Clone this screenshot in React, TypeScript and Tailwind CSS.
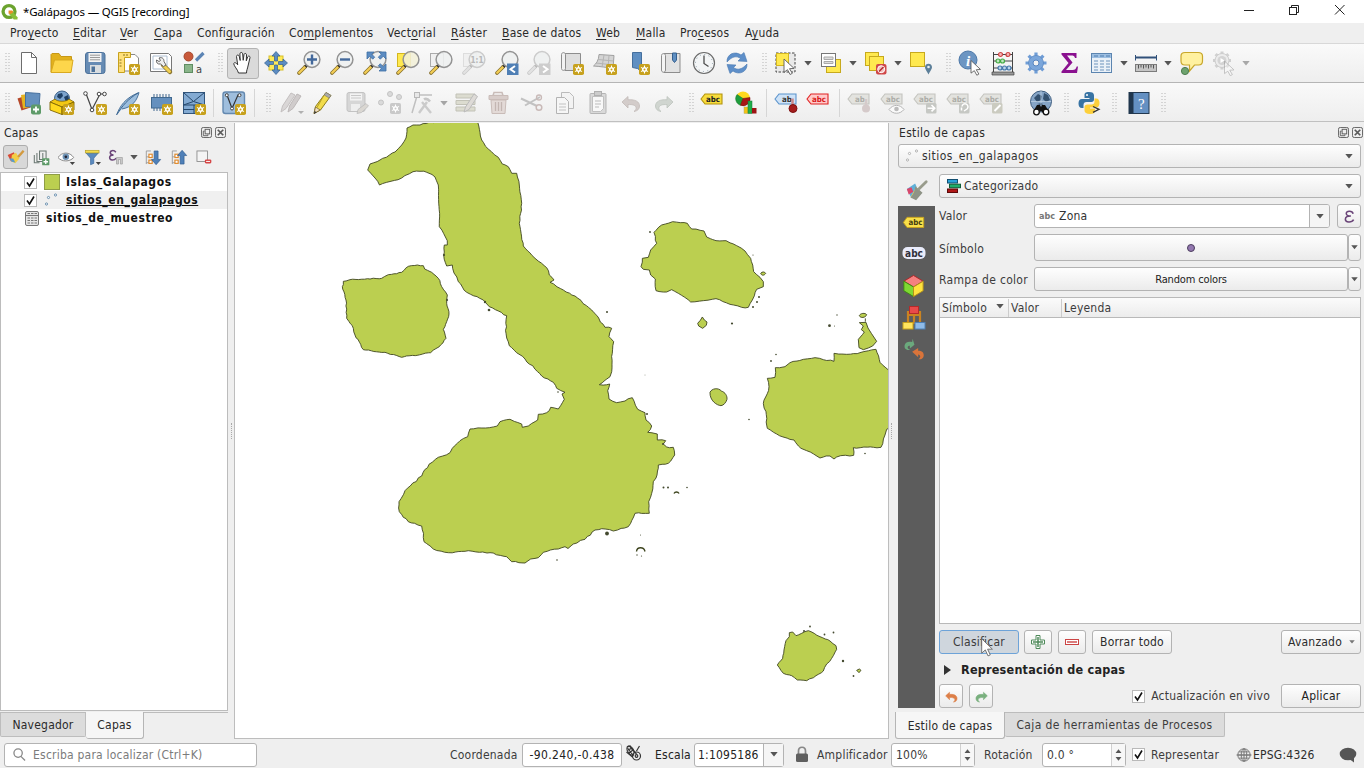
import React from "react";

type P = { children?: React.ReactNode; className?: string };

/* ---------- basic pieces ---------- */
const Ic = ({ children, className = "" }: P) => (
  <svg viewBox="0 0 26 26" className={"h-[26px] w-[26px] shrink-0 " + className} fill="none">
    {children}
  </svg>
);
const Slot = ({ children, className = "w-[33px]" }: P) => (
  <div className={"flex h-full shrink-0 items-center justify-center " + className}>{children}</div>
);
const Handle = ({ className = "w-[16px]" }: P) => (
  <Slot className={className}>
    <svg viewBox="0 0 5 20" className="h-5 w-[5px]" fill="#b4b4b4">
      {[0, 1, 2, 3, 4, 5, 6].map((i) => (
        <g key={i}>
          <rect x="0.5" y={i * 3} width="1" height="1" />
          <rect x="3.5" y={i * 3} width="1" height="1" />
        </g>
      ))}
    </svg>
  </Slot>
);
const Tri = ({ className = "text-[#555]" }: P) => (
  <svg viewBox="0 0 8 5" className={"h-[5px] w-2 shrink-0 " + className}>
    <path d="M0.3 0h7.400L4 4.600z" fill="currentColor" />
  </svg>
);
const Sep = ({ className = "w-2" }: P) => (
  <Slot className={className}>
    <div className="h-7 w-px bg-[#d6d6d6]" />
  </Slot>
);

const Star = ({ x = 14, y = 14, g = false }: { x?: number; y?: number; g?: boolean }) => (
  <g transform={`translate(${x} ${y})`}>
    <rect width="11" height="11" rx="1.8" fill={g ? "#c9c9c9" : "#c7a11d"} />
    <circle cx="5.5" cy="5.5" r="2.5" fill="#fff" />
    <path d="M5.5 1.4v8.2M2 3.4l7 4.2M9 3.4l-7 4.2" stroke="#fff" strokeWidth="1.1" />
    <circle cx="5.5" cy="5.5" r="1" fill={g ? "#c9c9c9" : "#c7a11d"} />
  </g>
);
const Lens = ({ children, g = false, fill = "#eef0f0" }: { children?: React.ReactNode; g?: boolean; fill?: string }) => (
  <g>
    <path d="M9.500 16.500L3 23" stroke={g ? "#cacaca" : "#86702c"} strokeWidth="3.800" strokeLinecap="round" />
    <path d="M9 17L3.200 22.800" stroke={g ? "#e2e2e2" : "#f3cd55"} strokeWidth="2.300" strokeLinecap="round" />
    <path d="M11.300 14.700L9.300 16.700" stroke={g ? "#b9b9b9" : "#333"} strokeWidth="2.800" />
    <circle cx="16" cy="9.500" r="7.900" fill={fill} fillOpacity="0.88" stroke={g ? "#cbcbcb" : "#939393"} strokeWidth="1.500" />
    {children}
  </g>
);
const TagShape = ({ fill, stroke, text, color = "#222" }: { fill: string; stroke: string; text: string; color?: string }) => (
  <g transform="translate(-1.500 -2)">
    <path d="M2.500 11L6.500 6h17v10h-17z" fill={fill} stroke={stroke} strokeWidth="1.100" />
    <text x="14.500" y="13.900" fontSize="7.800" letterSpacing="0" fontWeight="700" textAnchor="middle" fill={color} fontFamily="DejaVu Sans Condensed">{text}</text>
  </g>
);
const Globe = ({ cx, cy, r, c }: { cx: number; cy: number; r: number; c: string }) => (
  <g stroke={c} strokeWidth="1">
    <circle cx={cx} cy={cy} r={r} />
    <ellipse cx={cx} cy={cy} rx={r * 0.45} ry={r} />
    <path d={`M${cx - r} ${cy}h${2 * r}M${cx} ${cy - r}v${2 * r}M${cx - r * 0.8} ${cy - r * 0.5}h${r * 1.6}M${cx - r * 0.8} ${cy + r * 0.5}h${r * 1.6}`} />
  </g>
);
const Arrow = () => <path d="M0 0l10 9.4-4.5.3 2.8 4.6-2.2 1.2-2.6-4.8-3.5 2.6z" fill="#fff" stroke="#5b5b5b" strokeWidth="0.9" />;
const Undo = ({ c, s = c }: { c: string; s?: string }) => (
  <path d="M4 12l6-5.5v3.3c7-.6 11.5 1.8 11.5 6.2 0 3-2 5-5.5 5.5 1.8-1.4 2.4-2.6 2-4.2-.5-2-3.3-3-8-2.7V18z" fill={c} stroke={s} strokeWidth="0.8" />
);

/* ---------- toolbars ---------- */
const TopBar = () => (
  <div className="flex h-[39px] shrink-0 items-center border-b border-[#b5b5b5] bg-gradient-to-b from-[#fafafa] to-[#eeeeee]">
    <Handle className="w-[12px] pl-[3px]" />
    <Slot><Ic><path d="M5.500 2.500h10l5 5v16h-15z" fill="#fff" stroke="#6d6d6d" /><path d="M15.500 2.500v5h5" stroke="#6d6d6d" /></Ic></Slot>
    <Slot><Ic><path d="M2 22V4.500l1-1h7l2 3h10.500v4" fill="#e2b11c" stroke="#c79816" /><path d="M2 22.500L5.500 10h18.500L22 22.500z" fill="#fdd64b" stroke="#d9a91f" /></Ic></Slot>
    <Slot><Ic><rect x="3.500" y="2.500" width="19.500" height="21" rx="2.500" fill="#668bb4" stroke="#4d729a" /><rect x="6.500" y="3" width="13" height="9" fill="#f2f2f2" /><path d="M8 5.200h10M8 7.500h10M8 9.800h10" stroke="#999" /><rect x="8" y="15" width="11" height="8" fill="#d9dde0" /><rect x="9.500" y="16.500" width="3.500" height="5.500" fill="#4d729a" /></Ic></Slot>
    <Slot><Ic><path d="M5 4.500h15l3.500 3.500v13H5z" fill="#fff" stroke="#888" /><path d="M3.500 2.500h12v5H9.500v15h-6z" fill="#ffe07a" stroke="#c7a11d" /><path d="M4.500 10h2M4.500 13h2M4.500 16h2M9 4v2M12 4v2" stroke="#8a7420" /><Star /></Ic></Slot>
    <Slot><Ic><path d="M2.500 3.500h18l3 3v15h-21z" fill="#fff" stroke="#777" /><path d="M5 6h14v13H5z" stroke="#aebfd2" /><path d="M15 15l7 7" stroke="#8c7732" strokeWidth="4.500" strokeLinecap="round" /><path d="M16 16l5.500 5.500" stroke="#f1cf50" strokeWidth="3" strokeLinecap="round" /><path d="M11 8c2.500-1 5 0 5 3.500l2 3.500-2.500 1.500-3-2.500c-3 .5-4.500-1.500-4-4l2.500 1.500 1.500-1z" fill="#eee" stroke="#666" /></Ic></Slot>
    <Slot><Ic><circle cx="7.500" cy="6.500" r="4.500" fill="#c8593a" stroke="#a5462c" /><path d="M15 10.500L22.500 3" stroke="#5c85b5" strokeWidth="3.200" /><rect x="3.500" y="14.500" width="8" height="8" fill="#8ab58a" stroke="#5f8d62" /><text x="15" y="22.500" fontSize="11" fill="#444" fontFamily="DejaVu Sans Condensed">a</text></Ic></Slot>
    <Handle className="w-[17px] pl-[3px]" />
    <Slot className="w-[32.900px]">
      <div className="flex h-[31px] w-[32px] items-center justify-center rounded-[3px] border border-[#b3b3b3] bg-[#dadada]">
        <Ic><path d="M8.500 23c-1-4-4.500-6.500-4.800-9.500 1-1.500 2.500-.8 4 1.300L6.500 6.500c0-1.800 2.200-2 2.700-.3l1 4.300-.3-6.700c.2-1.800 2.500-1.800 2.800 0l.5 6.500.8-5.800c.5-1.600 2.400-1.300 2.500.3l-.2 6 1.400-4c.8-1.300 2.500-.8 2.300.8L18 16c-.5 3-1.500 4-1.500 7z" fill="#fff" stroke="#333" /></Ic>
      </div>
    </Slot>
    <Slot className="w-[32.900px]"><Ic><rect x="6" y="6" width="14" height="14" fill="#ffea57" stroke="#d8bf28" /><path d="M13 1.500l4 4.500h-2.500v5h-3V6H9zM13 24.500l4-4.500h-2.500v-5h-3v5H9zM1.500 13L6 9v2.500h4.500v3H6V17zM24.500 13L20 9v2.500h-4.500v3H20V17z" fill="#5c8cc2" stroke="#34608f" strokeWidth="0.700" /></Ic></Slot>
    <Slot className="w-[32.900px]"><Ic><Lens><path d="M16 4.500v10M11 9.500h10" stroke="#44699b" strokeWidth="2.400" /></Lens></Ic></Slot>
    <Slot className="w-[32.900px]"><Ic><Lens><path d="M11 9.500h10" stroke="#44699b" strokeWidth="2.400" /></Lens></Ic></Slot>
    <Slot className="w-[32.900px]"><Ic><Lens /><path d="M5 2h7L9.700 4.200l3 3-2 2-3-3L5 9zM24 2h-7l2.300 2.200-3 3 2 2 3-3L24 9zM24 21h-7l2.300-2.300-3-3 2-2 3 3L24 14z" fill="#5c8cc2" stroke="#3e6fa5" strokeWidth="0.800" /></Ic></Slot>
    <Slot className="w-[32.900px]"><Ic><rect x="2.500" y="3.500" width="13" height="13" fill="#ffe94f" stroke="#d4b720" /><Lens fill="#f3f0d8" /></Ic></Slot>
    <Slot className="w-[32.900px]"><Ic><rect x="2.500" y="3.500" width="13" height="13" fill="#f0f0f0" stroke="#aaa" /><Lens /></Ic></Slot>
    <Slot className="w-[32.900px]"><Ic><rect x="2.500" y="3.500" width="13" height="13" fill="#f0f0f0" stroke="#ddd" /><Lens g><text x="16" y="12.500" fontSize="8" letterSpacing="0" fontWeight="700" textAnchor="middle" fill="#b8b8b8" fontFamily="DejaVu Sans Condensed">1:1</text></Lens></Ic></Slot>
    <Slot className="w-[32.900px]"><Ic><Lens /><rect x="13" y="13.500" width="11.500" height="11.500" fill="#4f7fb5" /><path d="M21 16l-4.500 3.200L21 22.500" stroke="#fff" strokeWidth="2" /></Ic></Slot>
    <Slot className="w-[32.900px]"><Ic><Lens g /><rect x="13" y="13.500" width="11.500" height="11.500" fill="#cdcdcd" /><path d="M17 16l4.500 3.200L17 22.500" stroke="#fff" strokeWidth="2" /></Ic></Slot>
    <Slot className="w-[32.900px]"><Ic><path d="M6 3.500h15.500v17H6z" fill="#dedede" stroke="#8d8d8d" /><path d="M2.500 4.500c0-2.500 4-2.500 4 0v14c0 2.500-4 2.500-4 0z" fill="#f2f2f2" stroke="#8d8d8d" /><Star /></Ic></Slot>
    <Slot className="w-[32.900px]"><Ic><path d="M7 4.500l15 1-1 13c-6-1-12-2-19.500-2.500C4 14 7 10 7 4.500z" fill="#d4d4d4" stroke="#a0a0a0" /><path d="M12 5l-2 12M17 5.500l-1 12.500M6 9.500l15.500 1.500M4 13l17.500 2" stroke="#b4b4b4" /><Star /></Ic></Slot>
    <Slot className="w-[32.900px]"><Ic><path d="M7.500 2.500h9v19l-4-3-5-1z" fill="#5f8fc2" stroke="#446f9d" /><Star /></Ic></Slot>
    <Slot className="w-[32.900px]"><Ic><path d="M6 3.500h16v19H6z" fill="#e2e2e2" stroke="#8d8d8d" /><path d="M3.500 5.500c0-2.500 4-2.500 4 0V20c0 3-4 3-4 0z" fill="#f5f5f5" stroke="#8d8d8d" /><path d="M14.500 3h4v7l-2 2.500-2-2.500z" fill="#5f8fc2" stroke="#35608f" /></Ic></Slot>
    <Slot className="w-[32.900px]"><Ic><circle cx="13" cy="13" r="10.500" fill="#f3f5f6" stroke="#6a6a6a" strokeWidth="1.200" /><path d="M13 5.500v8l4.500 3" stroke="#4c4c4c" strokeWidth="1.300" /><circle cx="13" cy="13" r="8.500" stroke="#8a9ba8" strokeDasharray="1 3.450" /></Ic></Slot>
    <Slot className="w-[32.900px]"><Ic><path d="M3 12C2.500 4 11 .5 17 5l3-2.500 3 9-9-.5 2.500-2.500C12.500 5.500 8 6.500 3 12z" fill="#5e8fc9" stroke="#4a79b0" strokeWidth="0.600" /><path d="M23 14c.5 8-8 11.500-14 7l-3 2.500-3-9 9 .5-2.500 2.500c4 3 8.500 2 13.500-3.500z" fill="#5e8fc9" stroke="#4a79b0" strokeWidth="0.600" /></Ic></Slot>
    <Handle className="w-[17px] pl-[6px]" />
    <Slot className="w-[31px]"><Ic><rect x="3" y="3" width="19" height="19" stroke="#444" strokeDasharray="2.500 1.500" fill="#e9e9e9" /><rect x="3.500" y="3.500" width="12" height="12" fill="#ffe94f" stroke="#d4b720" /><g transform="translate(11 9)"><Arrow /></g></Ic></Slot>
    <Slot className="w-[14px]"><Tri /></Slot>
    <Slot className="w-[32px]"><Ic><rect x="8.500" y="9.500" width="14" height="13" fill="#ffe94f" stroke="#c7a91d" /><rect x="3.500" y="3.500" width="14" height="13" fill="#fff" stroke="#777" /><path d="M6 7h9v2.500H6zM6 11.500h9v2H6z" stroke="#aaa" fill="#ddd" /></Ic></Slot>
    <Slot className="w-[12px]"><Tri /></Slot>
    <Slot><Ic><rect x="2.500" y="2.500" width="13" height="13" fill="#ffe94f" stroke="#c7a91d" /><rect x="6.500" y="6.500" width="14" height="14" fill="#ffe94f" stroke="#c7a91d" /><rect x="13" y="14" width="10.500" height="10.500" rx="2" fill="#d04848" /><circle cx="18.200" cy="19.200" r="3.500" fill="#f3c0c0" stroke="#fff" /><path d="M16 21.500l4.500-4.500" stroke="#b02b2b" strokeWidth="1.500" /></Ic></Slot>
    <Slot className="w-[12px]"><Tri /></Slot>
    <Slot><Ic><rect x="2.500" y="2.500" width="14" height="14" fill="#ffe94f" stroke="#c7a91d" /><path d="M20.500 24.500c-2-4-3.500-5.500-3.500-7.500 0-4.500 7-4.500 7 0 0 2-1.500 3.500-3.500 7.500z" fill="#5c7f99" /><circle cx="20.500" cy="17" r="1.300" fill="#e8eef2" /></Ic></Slot>
    <Handle className="w-[16px] pl-[6px]" />
    <Slot><Ic><circle cx="11" cy="10" r="9" fill="#6c95c2" stroke="#4d78a8" /><text x="11" y="15.500" fontSize="15" letterSpacing="0" fontWeight="700" fontStyle="italic" textAnchor="middle" fill="#fff" fontFamily="Liberation Serif">i</text><g transform="translate(14 10.500) scale(.95)"><Arrow /></g></Ic></Slot>
    <Slot><Ic><path d="M3.500 2v20M22.500 2v20M3 4.500h20M3 11h20M3 18h20" stroke="#444" /><path d="M2 22h22v3H2z" fill="#999" stroke="#444" strokeWidth="0.700" /><g strokeWidth="1.200"><circle cx="10.500" cy="4.500" r="2" fill="#f4b5b5" stroke="#c44" /><circle cx="18" cy="4.500" r="2" fill="#f4b5b5" stroke="#c44" /><circle cx="8" cy="11" r="2" fill="#bfe8bf" stroke="#4a4" /><circle cx="12.500" cy="11" r="2" fill="#bfe8bf" stroke="#4a4" /><circle cx="10" cy="18" r="2" fill="#bcd5ec" stroke="#47a" /><circle cx="14.500" cy="18" r="2" fill="#bcd5ec" stroke="#47a" /><circle cx="19" cy="18" r="2" fill="#bcd5ec" stroke="#47a" /></g></Ic></Slot>
    <Slot><Ic><g stroke="#6f9dd6" strokeWidth="3.200"><path d="M13 2.500v21M2.500 13h21M5.600 5.600l14.800 14.800M20.400 5.600L5.600 20.400" /></g><circle cx="13" cy="13" r="7.500" fill="#7ba6da" stroke="#5785c0" strokeWidth="0.700" /><circle cx="13" cy="13" r="3" fill="#f3f3f3" stroke="#5785c0" /></Ic></Slot>
    <Slot><Ic><path d="M5.500 3h15v5h-1.500c-.5-2-1.500-2.500-4-2.500H11l5.500 7-6.500 7.500h6.500c2.500 0 3.500-1 4.200-3.500H22L21 23H5.500v-1.500l7-8.500-7-8.500z" fill="#8a118f" /></Ic></Slot>
    <Slot><Ic><rect x="2.500" y="3.500" width="20" height="19" fill="#eaf1f8" stroke="#5c85b0" /><rect x="3" y="4" width="19" height="4" fill="#9dbfe2" /><path d="M5 6h4M11 6h4M17 6h4" stroke="#4e7dae" /><path d="M5 11h4M5 14h4M5 17h4M5 20h4M11 11h4M11 14h4M11 17h4M11 20h4M17 11h4M17 14h4M17 17h4M17 20h4" stroke="#6d94bc" strokeWidth="1.200" /></Ic></Slot>
    <Slot className="w-[11px]"><Tri /></Slot>
    <Slot><Ic><path d="M3 7.500h20" stroke="#31517a" strokeWidth="2" /><path d="M2.500 5v5.500M23.500 5v5.500" stroke="#31517a" /><rect x="2.500" y="14.500" width="21" height="7" fill="#c5c5c5" stroke="#7b7b7b" /><path d="M5.500 15v3.500M8 15v2.500M10.500 15v3.500M13 15v2.500M15.500 15v3.500M18 15v2.500M20.500 15v3.500" stroke="#555" /></Ic></Slot>
    <Slot className="w-[12px]"><Tri /></Slot>
    <Slot><Ic><path d="M7 2.500h13c3 0 4.500 1 4.500 3.500v5c0 2.500-1.500 4-4 4h-4l-5 6v-6H7c-3 0-4-1.500-4-4V6c0-2.500 1-3.500 4-3.500z" fill="#fff1a0" stroke="#c8a72b" strokeWidth="1.200" /><circle cx="7" cy="21" r="3.600" fill="#6da26d" stroke="#4d7d50" /></Ic></Slot>
    <Slot><Ic><g stroke="#d0d0d0" strokeWidth="3"><path d="M11 1.500v18M2 10.500h18M4.600 4.100l12.800 12.800M17.400 4.100L4.600 16.900" /></g><circle cx="11" cy="10.500" r="7" fill="#ececec" stroke="#cdcdcd" /><circle cx="11" cy="10.500" r="4.500" fill="#d4d4d4" /><path d="M9.500 8v5l4-2.500z" fill="#fff" /><g opacity="0.350" transform="translate(13.500 11) scale(.95)"><Arrow /></g></Ic></Slot>
    <Slot className="w-[12px]"><Tri className="text-[#a8a8a8]" /></Slot>
  </div>
);

const GREY = { fill: "#e3e3df", stroke: "#c4c4bf", color: "#adada8" };
const SecondBar = () => (
  <div className="flex h-[39px] shrink-0 items-center border-b border-[#c0c0c0] bg-gradient-to-b from-[#f9f9f9] to-[#eeeeee] pt-[2px]">
    <Handle className="w-[12px] pl-[3px]" />
    <Slot><Ic><path d="M1.500 8.500l9-3 4 12-9 3z" fill="#b5482a" /><path d="M5 5l10-1.500 2 13-10 2z" fill="#e5b320" /><path d="M9.500 2.500l14.500 1-1 14-13.500-1z" fill="#6590be" stroke="#47719f" /><rect x="15" y="14.500" width="10" height="10" rx="2" fill="#5d9a68" /><path d="M20 16.500v6M17 19.500h6" stroke="#fff" strokeWidth="1.800" /></Ic></Slot>
    <Slot><Ic><circle cx="13" cy="8.500" r="7.500" fill="#7ca3cc" stroke="#3a5f88" /><path d="M9 4l4-1 1 3-3 3-3-2zM15 7l4-2 1 4-3 3z" fill="#1f3f63" /><path d="M1 12l5-3c2 3 12 3 14 0l5 3-12 5z" fill="#f3c813" stroke="#7d6405" strokeWidth="0.800" /><path d="M1 12l12 5v7.500L1 20z" fill="#ffd91e" stroke="#7d6405" strokeWidth="0.900" /><path d="M13 17l12-5v8l-12 4.500z" fill="#e0b000" stroke="#7d6405" strokeWidth="0.900" /><Star /></Ic></Slot>
    <Slot><Ic><path d="M4 3.500l6 16L18 4h4" stroke="#444" strokeWidth="1.200" /><g fill="#fff" stroke="#444"><circle cx="3.500" cy="3.500" r="1.800" /><circle cx="10" cy="20" r="1.800" /><circle cx="17" cy="4" r="1.800" /><circle cx="22.500" cy="4" r="1.800" /></g><Star x={14} /></Ic></Slot>
    <Slot><Ic><path d="M1.500 25C5 16 10 8 24 2.500 22 10 18 17 7 19" fill="#9cbede" stroke="#4a739c" /><path d="M2 24.500C7 16 13 9 23 3" stroke="#3d6690" /><Star /></Ic></Slot>
    <Slot><Ic><path d="M6 4v17M9 4v17M12 4v17M15 4v17M18 4v17M21 4v17" stroke="#5f7f9f" strokeWidth="1.200" /><rect x="3.500" y="7.500" width="20" height="10.500" fill="#6590be" stroke="#41698f" /><Star /></Ic></Slot>
    <Slot><Ic><rect x="2.500" y="2.500" width="21" height="21" fill="#83aad2" stroke="#31557c" /><path d="M2.500 15h21M13 15v8.500M2.500 2.500l10 9 11-9M2.500 15l10-3.500 11 3.500M2.500 19.500H13" stroke="#26486c" /><Star /></Ic></Slot>
    <Sep className="w-[7px]" />
    <Slot><Ic><rect x="2" y="2" width="21.500" height="21.500" rx="2.500" fill="#9fbedd" stroke="#6489b0" strokeWidth="1.400" /><path d="M6 5l5 13.500L17 5h3" stroke="#333" strokeWidth="1.200" /><g fill="#fff" stroke="#444"><circle cx="5.800" cy="5.200" r="1.500" /><circle cx="11" cy="18.500" r="1.500" /><circle cx="18.500" cy="5.200" r="1.500" /></g><Star /></Ic></Slot>
    <Sep className="w-[8px]" />
    <Handle className="w-[16px] pl-[4px]" />
    <Slot><Ic><path d="M3 22l1.500-6L13 3l4 2-9 13.500z" fill="#d9d6d6" stroke="#c4c0c0" /><path d="M10 22l1.500-6L19 4l4 2-8 12.500z" fill="#d0cccc" stroke="#bdb8b8" /><path d="M20 21h6l-3 3z" fill="#b0b0b0" /></Ic></Slot>
    <Slot className="w-[33px] pr-[3px]"><Ic><path d="M5 23.500l1.500-7L17 2.500l5 3-10.500 14.500z" fill="#f2dc4b" stroke="#8f7e1d" /><path d="M17 2.500l5 3-1.800 2.500-5-3z" fill="#aaa" stroke="#777" strokeWidth="0.600" /><path d="M14.500 6L8 17.500" stroke="#b5a024" /><path d="M5 23.500l1.500-6.500 4.700 3z" fill="#f1dfc0" stroke="#6e5d2e" strokeWidth="0.700" /><path d="M5 24l.6-3 2 1.300z" fill="#333" /></Ic></Slot>
    <Slot><Ic><rect x="3" y="2.500" width="18" height="19" rx="2" fill="#d6d6d6" stroke="#c3c3c3" /><rect x="6" y="3.500" width="12" height="7" fill="#f3f3f3" /><path d="M7 5.500h10M7 8h10" stroke="#c8c8c8" /><rect x="7" y="14" width="9" height="7" fill="#eee" /><path d="M13 23.500l1-4 8-6 2.500 2.500-7 6.500z" fill="#dad7d2" stroke="#bbb" strokeWidth="0.800" /></Ic></Slot>
    <Slot><Ic><g fill="#dadada" stroke="#c4c4c4"><circle cx="13" cy="4" r="2.500" /><circle cx="22" cy="7" r="2.500" /><circle cx="4" cy="12.500" r="2.500" /></g><Star x={13} y={13} g /></Ic></Slot>
    <Slot className="w-[32px]"><Ic><path d="M3 23l5-17M8 5h15" stroke="#c0c0c0" strokeWidth="1.500" /><rect x="5.500" y="2.500" width="5" height="5" fill="#e8e8e8" stroke="#b8b8b8" /><path d="M10 23l8-11M13 12l9 11" stroke="#cbcbcb" strokeWidth="2.400" /><path d="M15 9.500c2-1.500 4-.5 6 2" stroke="#c6c6c6" strokeWidth="2.600" /></Ic></Slot>
    <Slot className="w-[11px]"><Tri className="text-[#a5a5a5]" /></Slot>
    <Slot><Ic><path d="M3 4h19v4H3zM3 10.500h19v4H3zM3 17h19v4H3z" fill="#dcdcd0" stroke="#c2c2b7" /><path d="M11 22l1.500-5L21 4l3.500 2.500-8.500 13z" fill="#dedbd7" stroke="#bbb" /></Ic></Slot>
    <Slot><Ic><path d="M8 2.500h8l1 3H7z" stroke="#c9bcb8" strokeWidth="1.500" /><path d="M3 5.500h19v4H3z" fill="#d8cdca" stroke="#c9bcb8" /><path d="M5 10h15l-1 13.500H6z" fill="#e3dad7" stroke="#c9bcb8" /><path d="M9.500 12v9M12.500 12v9M15.500 12v9" stroke="#c3b6b2" strokeWidth="1.300" /></Ic></Slot>
    <Slot><Ic><path d="M2 8.500l16 7.500M6 15.500l15-8.500" stroke="#c2c2c2" strokeWidth="2" /><circle cx="20" cy="7.500" r="2.500" stroke="#c9bab8" strokeWidth="1.300" /><circle cx="20" cy="17.500" r="2.800" stroke="#c9bab8" strokeWidth="1.500" /></Ic></Slot>
    <Slot><Ic><path d="M9.500 2.500h8l4 4v12h-12z" fill="#f3f3f3" stroke="#bbb" /><path d="M4.500 7.500h8l4 4v12h-12z" fill="#f6f6f6" stroke="#b3b3b3" /><path d="M7 14h7M7 17h7M7 20h7" stroke="#c2c2c2" /></Ic></Slot>
    <Slot><Ic><rect x="5" y="3.500" width="16" height="20" rx="1" fill="#d9d9d9" stroke="#b5b5b5" /><path d="M7.500 6.500h11v12l-3 3h-8z" fill="#f8f8f8" stroke="#c0c0c0" /><rect x="9.500" y="1.500" width="7" height="4" fill="#ccc" stroke="#b0b0b0" /><path d="M10 11h6M10 14h6M10 17h4" stroke="#bbb" /></Ic></Slot>
    <Slot><Ic><Undo c="#d3ccca" s="#c2bab8" /></Ic></Slot>
    <Slot><Ic className="-scale-x-100"><Undo c="#d0d5d0" s="#bdc3bd" /></Ic></Slot>
    <Handle className="w-[16px] pl-[6px]" />
    <Slot><Ic><TagShape fill="#f7dc3c" stroke="#b3940f" text="abc" /></Ic></Slot>
    <Slot><Ic><circle cx="10" cy="8.500" r="7" fill="#ffd91e" /><path d="M10 8.500L4 4.500a7 7 0 003.500 10.800z" fill="#1f9d3c" stroke="#11702a" strokeWidth="0.500" /><path d="M10 8.500l7-1a7 7 0 01-9.500 7.800z" fill="#a81616" stroke="#6d0d0d" strokeWidth="0.500" /><rect x="11" y="17" width="4" height="6.500" fill="#f5c211" stroke="#aa7" strokeWidth="0.500" /><rect x="15" y="11" width="4" height="12.500" fill="#1fae4b" stroke="#147334" strokeWidth="0.500" /><rect x="19" y="18" width="4.500" height="5.500" fill="#9c1414" /></Ic></Slot>
    <Sep className="w-[9px]" />
    <Slot className="w-[32px]"><Ic><TagShape fill="#cde2f7" stroke="#5b93cc" text="ab" color="#333" /><path d="M18.500 8.500v7" stroke="#c88" strokeWidth="2.500" /><circle cx="19" cy="18.500" r="4" fill="#a51d1d" stroke="#7d1111" /></Ic></Slot>
    <Slot className="w-[32px]"><Ic><TagShape fill="#ffc9c9" stroke="#e02222" text="abc" color="#d81818" /></Ic></Slot>
    <Sep className="w-[8px]" />
    <Slot><Ic><TagShape {...GREY} text="ab" /><circle cx="19" cy="18.500" r="4" fill="#d5caca" /><path d="M19 9v7" stroke="#d5caca" strokeWidth="2.500" /></Ic></Slot>
    <Slot><Ic><TagShape {...GREY} text="abc" /><path d="M9 19.500c4-5.500 11-5.500 15 0-4 5-11 5-15 0z" fill="#fafafa" stroke="#b5b5b5" /><circle cx="16.500" cy="19" r="2.300" fill="#bbb" /></Ic></Slot>
    <Slot><Ic><TagShape {...GREY} text="abc" /><rect x="13" y="13" width="10.500" height="10.500" rx="1.500" fill="#c6c8c4" /><path d="M14.500 18.200h7M18.500 15l3.200 3.200-3.200 3.200" stroke="#fff" strokeWidth="1.600" /></Ic></Slot>
    <Slot><Ic><TagShape {...GREY} text="abc" /><rect x="13" y="13" width="10.500" height="10.500" rx="1.500" fill="#c6c8c4" /><path d="M16 16.500a3 3 0 115 2.500l-3 2M15.500 17.500v3" stroke="#fff" strokeWidth="1.500" /></Ic></Slot>
    <Slot><Ic><TagShape {...GREY} text="abc" /><rect x="13" y="13" width="10.500" height="10.500" rx="1.500" fill="#cbcbc0" /><path d="M15.500 21l6-6" stroke="#fff" strokeWidth="2" /></Ic></Slot>
    <Handle className="w-[16px] pl-[3px]" />
    <Slot><Ic><circle cx="13" cy="11.500" r="10.500" fill="#86a5c7" stroke="#3f5e80" /><path d="M6 8l4-4 4 2-1 4-4 2zM16 3l4 2 2 5-4 2-3-3zM9 14l5-1 1 3z" fill="#34516f" /><path d="M3 11.500h20M13 1v21" stroke="#c4d5e6" strokeWidth="0.700" /><path d="M6 20l3-5h3l1 2 1-2h3l3 5v3h-5l-2-2-2 2H6z" fill="#111" /><circle cx="8.500" cy="22" r="2.800" fill="#fff" stroke="#111" strokeWidth="1.300" /><circle cx="18" cy="22" r="2.800" fill="#fff" stroke="#111" strokeWidth="1.300" /></Ic></Slot>
    <Handle className="w-[16px] pl-[2px]" />
    <Slot><Ic><path d="M12 2c-4 0-4.500 1.500-4.500 3.500V8h5v1H5c-2.500 0-3.500 2-3.500 4.500S2.500 18 5 18h1.500v-3c0-2 1-3 3-3h5c1.500 0 2.500-1 2.500-2.500v-4C17 3 15.500 2 12 2z" fill="#3873a3" /><path d="M19 8.500h-1.500v3c0 2-1 3-3 3h-4c-2 0-3 1-3 2.500v3.500c0 2 2 3.500 5.500 3.500s5-1 5-3.500v-2h-5v-1H19c2.500 0 3.500-2 3.500-4.500S21.500 8.500 19 8.500z" fill="#fdd03b" /><circle cx="10" cy="5" r="1" fill="#fff" /><path d="M16 16.500l6 2.800-6 3" stroke="#333" strokeWidth="1.300" /></Ic></Slot>
    <Handle />
    <Slot><Ic><rect x="3" y="2.500" width="20" height="21" fill="#6490c2" stroke="#22384f" /><rect x="3" y="2.500" width="4.500" height="21" fill="#20364d" /><text x="15.300" y="18.500" fontSize="15" letterSpacing="0" textAnchor="middle" fill="#fff" fontFamily="Liberation Serif">?</text></Ic></Slot>
    <Handle className="w-[16px]" />
  </div>
);

/* ---------- window chrome ---------- */
const MENU: [string, string, string, string][] = [
  ["Pro", "y", "ecto", "w-[63px]"], ["", "E", "ditar", "w-[47px]"], ["", "V", "er", "w-[34px]"], ["", "C", "apa", "w-[43px]"],
  ["Confi", "g", "uración", "w-[92px]"], ["Co", "m", "plementos", "w-[98px]"], ["Vect", "o", "rial", "w-[64px]"], ["", "R", "áster", "w-[51px]"],
  ["", "B", "ase de datos", "w-[94px]"], ["", "W", "eb", "w-[40px]"], ["", "M", "alla", "w-[44px]"], ["Pro", "c", "esos", "w-[65px]"], ["A", "y", "uda", "w-[50px]"],
];

const FloatClose = () => (
  <div className="flex gap-[3px]">
    <svg viewBox="0 0 12 12" className="h-[11px] w-[11px]" fill="none" stroke="#5a5a5a"><rect x="0.500" y="0.500" width="11" height="11" rx="2" /><rect x="4.500" y="2.500" width="5" height="5" /><path d="M4 4.500H2.500v5h5V8" /></svg>
    <svg viewBox="0 0 12 12" className="h-[11px] w-[11px]" fill="none" stroke="#5a5a5a"><rect x="0.500" y="0.500" width="11" height="11" rx="2" /><path d="M3 3l6 6M9 3l-6 6" strokeWidth="1.900" /></svg>
  </div>
);
const Check = ({ className = "" }: P) => (
  <svg viewBox="0 0 13 13" className={"h-[13px] w-[13px] shrink-0 " + className}>
    <rect x="0.500" y="0.500" width="12" height="12" fill="#fff" stroke="#b9b9b9" />
    <path d="M3 6.500L5.500 10 10 2.500" fill="none" stroke="#111" strokeWidth="1.600" />
  </svg>
);
const Dots = ({ c }: { c: string }) => (
  <svg viewBox="0 0 14 14" className="h-[14px] w-[14px] shrink-0" fill="#fff" stroke={c} strokeWidth="0.900"><circle cx="2.500" cy="11" r="1.100" /><circle cx="4.500" cy="4.500" r="1.100" /><circle cx="11.500" cy="2" r="1.100" /></svg>
);
const Brush = ({ className = "" }: P) => (
  <Ic className={className}>
    <path d="M2 12l9-6 4 9-8 7z" fill="#5fb0d8" /><path d="M2 12l5-2 2 5-5 3z" fill="#d9476b" /><path d="M8 17l4-7 4 3-5 9-5-1z" fill="#efcf53" />
    <path d="M11 9l8 7-7 8-6-3c3-3 5-7 5-12z" fill="#8e9386" /><path d="M15 12l8-8" stroke="#999c8c" strokeWidth="3" strokeLinecap="round" />
  </Ic>
);

const TreeArrow = ({ up = false }: { up?: boolean }) => (
  <Ic className="!h-[17px] !w-[17px]"><path d="M2 3h7M2 3v20M2 12h4M2 21h4" stroke="#999" strokeWidth="1.400" /><rect x="6" y="8" width="5" height="5" fill="#fff" stroke="#e08a2c" strokeWidth="1.800" /><rect x="6" y="17" width="5" height="5" fill="#fff" stroke="#e08a2c" strokeWidth="1.800" /><path d={up ? "M17 2l7 8h-4v13h-6V10h-4z" : "M17 24l7-8h-4V3h-6v13h-4z"} fill="#4f80b8" stroke="#2f5b8d" /></Ic>
);

const LayersDock = () => (
  <div className="flex w-[228px] shrink-0 flex-col">
    <div className="flex h-[19px] items-center justify-between pl-1 pr-[2px]"><span>Capas</span><FloatClose /></div>
    <div className="flex h-[30px] items-center pl-[3px]">
      <div className="flex h-[24px] w-[25px] items-center justify-center rounded-[3px] border border-[#adadad] bg-[#d8d8d8]">
        <Ic className="!h-[18px] !w-[18px]"><path d="M1 10l9-4 3 8-7 6z" fill="#d84a35" /><path d="M7 10l6-3 5 8-6 7-6-3z" fill="#f3ce45" /><path d="M3 15l4 5 5 1-3-6z" fill="#5c9ac9" /><path d="M16 13l8-9" stroke="#d39a3f" strokeWidth="3.500" /></Ic>
      </div>
      <Slot className="w-[26px]"><Ic className="!h-[17px] !w-[17px]"><path d="M2 9v12h8M6 6v13h9M10 3h10v13H10zM15 6v9" stroke="#6b7873" strokeWidth="1.600" /><rect x="14" y="14" width="11" height="11" rx="1" fill="#5d9a68" /><path d="M19.500 16v7M16 19.500h7" stroke="#fff" strokeWidth="2" /></Ic></Slot>
      <Slot className="w-[25px]"><Ic className="!h-[17px] !w-[17px]"><path d="M0 13C6 4 18 4 24 13c-6 7-18 7-24 0z" fill="#fff" stroke="#888" strokeWidth="1.500" /><circle cx="12" cy="12" r="5" fill="#6e93b5" /><circle cx="12" cy="12" r="2" fill="#223" /><path d="M18 20h8l-4 4.500z" fill="#444" /></Ic></Slot>
      <Slot className="w-[26px]"><Ic className="!h-[17px] !w-[17px]"><path d="M3 6l7 8v10l5-2v-8l7-8z" fill="#5a8abf" stroke="#3c6a9c" /><rect x="2" y="2" width="21" height="4" fill="#f2dd4e" stroke="#b39c26" /><path d="M18 20h8l-4 4.500z" fill="#444" /></Ic></Slot>
      <Slot className="w-[23px]"><Ic className="!h-[17px] !w-[17px]"><path d="M12 5C9 1 3 2 3.500 6c.3 3 3 3 5 3-3 0-6 1-6 4 0 5 7 5 10 1" stroke="#6a4478" strokeWidth="2.300" /><path d="M13 13h9v10h-3v-7h-3v7h-3z" fill="#ccc" stroke="#999" /></Ic></Slot>
      <Slot className="w-[12px]"><Tri /></Slot>
      <Slot className="w-[27px]"><TreeArrow /></Slot>
      <Slot className="w-[24px]"><TreeArrow up /></Slot>
      <Slot className="w-[24px]"><Ic className="!h-[17px] !w-[17px]"><rect x="3" y="3" width="16" height="16" fill="#f4f4f4" stroke="#888" strokeWidth="1.300" /><rect x="15" y="16" width="10" height="6" rx="2" fill="#d54545" /><path d="M17 19h6" stroke="#fff" strokeWidth="1.500" /></Ic></Slot>
    </div>
    <div className="flex flex-1 flex-col border border-[#bcbcbc] bg-white font-bold tracking-[0.580px] text-[#111]">
      <div className="flex h-[18px] items-center pl-[23px]"><Check /><div className="ml-[7px] mr-[6px] h-4 w-4 border border-[#8f9d47] bg-[#bbcf50]" />Islas_Galapagos</div>
      <div className="flex h-[18px] items-center bg-[#f0f0f0] pl-[23px]"><Check /><span className="ml-[7px] mr-[8px]"><Dots c="#5d87a8" /></span><span className="underline">sitios_en_galapagos</span></div>
      <div className="flex h-[18px] items-center pl-[24px]">
        <svg viewBox="0 0 14 15" className="mr-[7px] h-[15px] w-[14px]"><rect x="0.500" y="0.500" width="13" height="14" rx="1.500" fill="#e6e6e6" stroke="#777" /><path d="M1 4.500h12M2.500 2.500h2.500M6 2.500h2.500M9.500 2.500H12M2.500 7H5M6 7h2.500M9.500 7H12M2.500 9.500H5M6 9.500h2.500M9.500 9.500H12M2.500 12H5M6 12h2.500M9.500 12H12" stroke="#777" /></svg>
        sitios_de_muestreo
      </div>
    </div>
    <div className="mt-px flex h-[27px] items-start border-t border-[#bcbcbc] leading-none">
      <div className="flex h-[24px] w-[86px] items-center justify-center rounded-b-[2px] border border-t-0 border-[#bdbdbd] bg-[#dcdcdc]">Navegador</div>
      <div className="-mt-px flex h-[27px] w-[58px] items-center justify-center rounded-b-[3px] border border-l-0 border-t-0 border-[#b5b5b5] bg-[#f6f6f6]">Capas</div>
    </div>
  </div>
);

/* ---------- map ---------- */
const rough = (flat: string, amp: number) => {
  const v = flat.trim().split(/[\s,]+/).map(Number);
  const n = v.length / 2;
  let seed = 7;
  const rnd = () => ((seed = (seed * 16807) % 2147483647) / 2147483647 - 0.5) * 2 * amp;
  const out: string[] = [];
  for (let i = 0; i < n; i++) {
    const x = v[2 * i], y = v[2 * i + 1], j = (i + 1) % n, X = v[2 * j], Y = v[2 * j + 1];
    out.push(`${x},${y}`);
    const steps = Math.floor(Math.hypot(X - x, Y - y) / (amp * 5));
    for (let k = 1; k < steps; k++) out.push(`${(x + ((X - x) * k) / steps + rnd()).toFixed(1)},${(y + ((Y - y) * k) / steps + rnd()).toFixed(1)}`);
  }
  return out.join(" ");
};
const ISABELA = "430,122 420,125 413,125 407,128 406,138 401.7,145 395,152 380,160 370,164 367.7,170 375,178 379.5,185 390,181.5 401.7,178 413,171.7 420,171.3 426.7,172.3 432,174.500 435,177 438.3,185 439,206.7 439.3,226.7 447.3,240.7 447.3,245 444.3,245 443.7,255 446.7,266 452.3,265 454,273 458.3,281.7 466.7,292.3 483.3,300 489.3,306.7 506.7,315.7 506,333.3 509.3,345.7 525,359 541.7,376 553.3,382.3 556.7,388.3 565,392.3 562,394 564.3,399.3 558.3,409 550.7,407.3 546.7,412.7 538.3,414.3 537.7,420 528.3,426 522.3,427.3 521.7,424 510,419.3 500,421.7 497.3,426 489.3,427.7 470,429 467.7,436.7 460,440.7 452.3,448.3 450,452.7 438.3,457.3 429,464.3 421.7,476 405,490.7 399,501.7 399.3,511.7 408.3,521.7 421.7,526 424,541.7 433.3,549 448.3,552.7 468.3,550.7 490,552.7 506.7,556.7 511.7,561.7 525,563 530.7,559 538.3,557.7 543.3,552.3 565,546.7 568,548.5 573.3,544 585,539.3 595,530 601.7,528.7 613.3,531 628.3,526.7 635,513.3 649.3,513.3 648.7,501.7 651.7,493.3 653.3,481.7 656,478 658.3,465 668.3,463.3 674.7,455 673.3,447.3 666.7,447 663.3,444 665.7,440.7 657.3,440 657.3,434 647.7,432.3 651.7,426 646,420 645,412.7 637.7,409.3 632.3,397.7 625,401 616.7,402.7 609,399 607.7,390.7 609.7,384 599.3,384.7 610,376.7 611.7,371.7 612.3,353.3 613.7,341.7 609,336.7 611.7,328.3 605,327.3 591.7,310 575,296 563.3,290 550,282.3 554,280 549.3,275 546.7,267.7 535,258.3 523.3,246 519.3,223.3 521.7,203.3 519.3,185 516.7,173.3 511.7,173.3 508.3,166.7 502.3,164 498.3,157.3 488.3,149 481.7,140 477.7,122";
const FERNANDINA = "40,484 60,479 155,475 175,464 215,457 235,439 262,435 280,437 284,447 305,457 325,475 335,500 352,525 350,550 357,582 350,605 340,628 348,655 328,680 302,698 215,712 165,697 100,689 92,673 75,645 70,625 50,595 48,540 37,500";
const SANTIAGO = "72,97 95,75 128,65 172,70 185,87 222,93 230,111 258,122 288,122 320,137 345,153 362,175 371,215 390,232 400,245 400,260 380,268 367,300 355,322 335,322 300,313 258,296 220,302 182,306 145,280 125,269 110,276 78,272 76,237 62,225 58,210 40,208 33,200 37,175 55,172 62,150 80,130";
const SANTACRUZ = "436,503 465,500 480,488 520,478 555,473 580,479 612,484 612,460 650,463 690,458 738,448 750,487 785,520 785,680 770,688 765,705 753,742 670,743 671,766 632,767 612,777 600,768 570,774 530,752 513,745 492,720 440,702 412,685 408,635 400,610 417,560 412,535 435,532";
const FLOREANA = "138,92 148,80 148,68 158,66 168,77 185,70 205,62 213,65 240,80 270,93 288,107 290,118 275,145 260,162 250,183 228,197 200,212 172,210 155,197 130,190 112,165 128,145 132,120";
const SPECKS: [number, number, number][] = [
  [607, 312, 1], [645, 375, 0.4], [558, 392, 0.8], [650, 232, 0.9], [753, 255, 0.6], [732, 323.500, 1.1], [829.500, 325.700, 1.4], [837, 315, 0.7], [834.500, 326, 0.5],
  [776, 354.500, 0.8], [771, 361, 0.9], [749, 419.500, 0.8], [865, 453.500, 0.8], [663.500, 487.500, 1], [668, 487.500, 1], [687, 487.500, 0.8], [640.500, 535, 0.5],
  [557, 560, 0.8], [637, 555, 0.7], [641.500, 556, 0.6], [810, 626.500, 0.9], [824.500, 634.500, 0.9], [833.500, 632.500, 0.9], [843, 661, 1.2], [853.500, 676, 0.9],
  [759, 297, 1], [757, 302, 1], [753, 307, 1], [444, 255, 1.1], [489, 310, 1.3], [485, 302, 1.2], [447, 300, 1.1], [647, 414, 1], [663, 444, 1], [607, 533.500, 1.900], [804, 631, 1],
];
const MapCanvas = () => (
  <div className="w-[655px] shrink-0 border-b border-l border-r border-[#bdbdbd] bg-white">
    <svg viewBox="235 123 653 615" className="block h-[615px] w-[653px]" fill="#bbcf50" stroke="#3f4620" strokeWidth="0.900" strokeLinejoin="round">
      <polygon points={rough(ISABELA, 0.650)} />
      <g transform="translate(330 120) scale(.33333)" strokeWidth="2.700"><polygon points={rough(FERNANDINA, 1.6)} /></g>
      <g transform="translate(630 200) scale(.33333)" strokeWidth="2.700">
        <polygon points={rough(SANTIAGO, 2)} />
        <polygon points={rough(SANTACRUZ, 2)} />
        <polygon points="688,368 708,367 714,384 724,400 740,424 728,438 715,444 700,449 687,443 685,418 698,403 703,396 694,389 700,378" />
        <path d="M688 347c3-8 18-9 22-3-3 10-19 11-22 3zM706 355v10M392 220c5-6 12-5 15 0-4 7-12 8-15 0z" />
        <path d="M203 370l8-9 6-10 6 9 8 6-2 10-11 9-12-7z" />
        <path d="M240 577c5-12 25-15 34-4 12 4 18 15 17 25-3 10-10 18-18 19-13-1-34-15-33-40z" />
      </g>
      <g transform="translate(740 610) scale(.33333)" strokeWidth="2.700"><polygon points={rough(FLOREANA, 1.600)} /><path d="M350 181l8-4 5 4-6 7z" /></g>
      <path d="M636.500 551.500c.5-5 7.500-5 8.500 0M674 493.500c1-2 4-2 5 0" fill="none" strokeWidth="1.400" />
      {SPECKS.map(([x, y, r], i) => <circle key={i} cx={x} cy={y} r={r} fill="#444a30" stroke="none" />)}
    </svg>
  </div>
);

/* ---------- styling panel ---------- */
const BTN = "flex items-center justify-center rounded-[3px] border border-[#b3b3b3] bg-gradient-to-b from-[#fefefe] to-[#ebebeb] ";
const StyleDock = () => (
  <div className="flex min-w-0 flex-1 flex-col pl-[5px]">
    <div className="flex h-[19px] items-center justify-between pl-[4px] pr-px"><span className="tracking-[0.330px]">Estilo de capas</span><FloatClose /></div>
    <div className={BTN + "mb-[6px] ml-[3px] mr-[3px] mt-[2px] h-[24px] !justify-start pl-[6px] pr-[7px] text-[#333]"}><Dots c="#aaa" /><span className="ml-[3px] flex-1 tracking-[0.450px]">sitios_en_galapagos</span><Tri /></div>
    <div className="flex h-[534px]">
      <div className="ml-[3px] flex w-[37px] flex-col">
        <div className="flex h-[32px] items-center justify-center"><Brush className="!h-[24px] !w-[24px]" /></div>
        <div className="flex flex-1 flex-col items-center bg-[#5c5c5c] pr-[6px]">
          <Ic className="mt-[2px] !h-[27px] !w-[24px]"><path d="M1.500 14l4-5.500h18v11h-18z" fill="#f8df4a" stroke="#c7a11d" /><text x="14.500" y="17" fontSize="8.500" letterSpacing="0" fontWeight="700" textAnchor="middle" fill="#443d10" fontFamily="DejaVu Sans Condensed">abc</text></Ic>
          <Ic className="mt-[4px]"><rect x="1.500" y="8" width="23" height="12" rx="5" fill="#e9ebfa" /><text x="13" y="17.500" fontSize="10" letterSpacing="0" fontWeight="700" textAnchor="middle" fill="#30303c" fontFamily="DejaVu Sans Condensed">abc</text></Ic>
          <Ic className="mt-[8px] !w-[25px]"><path d="M3 8l10-6 10 6-10 6z" fill="#f58080" stroke="#b02525" /><path d="M3 8l10 6v10L3 18z" fill="#7fd932" stroke="#3c8a12" /><path d="M23 8l-10 6v10l10-6z" fill="#ffe23e" stroke="#b3921b" /></Ic>
          <Ic className="mt-[6px]"><path d="M7 6v12M19 6v12M13 7v12M7 10h12" stroke="#c98322" strokeWidth="2.200" /><rect x="8.500" y="1.500" width="9" height="7" fill="#e84a4a" stroke="#b52a2a" /><rect x="2" y="17.500" width="10" height="6.500" fill="#ffe45e" stroke="#c7a11d" /><rect x="14" y="17.500" width="10" height="6.500" fill="#8fbbe8" stroke="#4e80b5" /></Ic>
          <Ic className="mt-[5px] !w-[24px]"><path d="M11.500 2l2 6.500-5 4V9.500c-3 0-3.500 3 .5 4.500-5 1-7-2-6-5.500 1-3 4-4 8-3z" fill="#6ba97d" /><path d="M11 16l6.500-4v3c4 0 6.500 2 6 5.500-.6 3-3 4-6 3.500 3-1 3-4.500 0-5v3z" fill="#d9743a" /></Ic>
        </div>
      </div>
      <div className="ml-[4px] mr-[3px] flex min-w-0 flex-1 flex-col text-[#3c3c3c]">
        <div className={BTN + "h-[24px] shrink-0 !justify-start pl-[7px] pr-[7px]"}>
          <svg viewBox="0 0 14 14" className="mr-[3px] h-[14px] w-[14px]"><rect x="0.500" y="0.500" width="10" height="3.500" fill="#29a3d8" stroke="#124e70" /><rect x="2.500" y="5.200" width="11" height="3.500" fill="#1fae6b" stroke="#0f5c36" /><rect x="0.500" y="10" width="10" height="3.500" fill="#b01717" stroke="#5c0909" /></svg>
          <span className="flex-1">Categorizado</span><Tri />
        </div>
        <div className="mt-[6px] flex h-[24px] shrink-0 items-center">
          <span className="w-[95px]">Valor</span>
          <div className="flex h-[24px] flex-1 items-center rounded-[3px] border border-[#b3b3b3] bg-white pl-[4px]"><span className="mr-[4px] text-[9px] font-bold leading-none tracking-normal text-[#777]">abc</span><span className="flex-1 text-[#333]">Zona</span><div className="flex h-full w-[20px] items-center justify-center rounded-r-[2px] border-l border-[#b3b3b3] bg-[#f5f5f5]"><Tri /></div></div>
          <div className={BTN + "ml-[7px] h-[24px] w-[24px]"}><svg viewBox="0 0 12 14" className="h-[13px] w-[11px]" fill="none" stroke="#6a4478" strokeWidth="1.700"><path d="M10 4C9 0 2 .5 2.500 4c.3 2.500 3 2.500 5 2.500C4 6.500 1.500 7.500 1.500 10c0 4 7 4 9 .5" /></svg></div>
        </div>
        <div className="mt-[6px] flex h-[27px] shrink-0 items-center"><span className="w-[95px] pt-[2px]">Símbolo</span><div className={BTN + "h-[27px] flex-1"}><div className="h-[8px] w-[8px] rounded-full border border-[#4c3d5e] bg-[#9378b0]" /></div><div className={BTN + "h-[27px] w-[13px]"}><Tri className="!w-[7px] text-[#555]" /></div></div>
        <div className="mt-[6px] flex h-[24px] shrink-0 items-center"><span className="w-[95px] whitespace-nowrap pt-px tracking-[0.300px]">Rampa de color</span><div className={BTN + "h-[24px] flex-1 pt-[2px] text-[11px] tracking-[-0.150px] text-[#222]"}>Random colors</div><div className={BTN + "h-[24px] w-[13px]"}><Tri className="!w-[7px] text-[#555]" /></div></div>
        <div className="mt-[6px] flex h-[327px] shrink-0 flex-col border border-[#b9b9b9] bg-white">
          <div className="flex h-[20px] items-center border-b border-[#b9b9b9] bg-gradient-to-b from-[#fbfbfb] to-[#ececec] pt-px">
            <div className="flex h-full w-[69px] items-center justify-between border-r border-[#ccc] pl-[2px] pr-[4px]">Símbolo<Tri className="mb-[4px] text-[#555]" /></div>
            <div className="flex h-full w-[53px] items-center border-r border-[#ccc] pl-[2px]">Valor</div>
            <div className="pl-[2px]">Leyenda</div>
          </div>
        </div>
        <div className="mt-[6px] flex h-[24px] shrink-0">
          <div className="flex w-[80px] items-center justify-center rounded-[3px] border border-[#6da3d8] bg-[#cfd6dd]">Clasificar</div>
          <div className={BTN + "ml-[5px] w-[28px]"}><svg viewBox="0 0 14 14" className="h-[14px] w-[14px]"><path d="M5 .5h4V5h4.500v4H9v4.500H5V9H.5V5H5z" fill="#fff" stroke="#4f8a5b" /><path d="M7 2v10M2 7h10" stroke="#4f8a5b" strokeWidth="1.500" /></svg></div>
          <div className={BTN + "ml-[6px] w-[28px]"}><svg viewBox="0 0 14 6" className="h-[6px] w-[14px]"><rect x="0.500" y="0.500" width="13" height="5" fill="#fff" stroke="#cc4444" /><path d="M2 3h10" stroke="#cc4444" strokeWidth="1.400" /></svg></div>
          <div className={BTN + "ml-[6px] w-[80px] text-[#2c2c2c]"}>Borrar todo</div>
          <div className="flex-1" />
          <div className={BTN + "w-[80px] gap-[7px] pl-[1px] text-[#2c2c2c]"}>Avanzado<Tri className="!h-[4px] !w-[6px] text-[#777]" /></div>
        </div>
        <div className="mt-[7px] flex h-[18px] shrink-0 items-center pl-[5px] text-[12.500px] font-bold text-[#222]"><svg viewBox="0 0 7 10" className="mr-[10px] h-[10px] w-[7px]"><path d="M0 0l7 5-7 5z" fill="#333" /></svg>Representación de capas</div>
        <div className="mt-[5px] flex h-[24px] shrink-0 items-center">
          <div className={BTN + "h-[24px] w-[24px]"}><Ic className="!h-[17px] !w-[17px]"><Undo c="#dd7f48" /></Ic></div>
          <div className={BTN + "ml-[6px] h-[24px] w-[24px]"}><Ic className="!h-[17px] !w-[17px] -scale-x-100"><Undo c="#79b07e" /></Ic></div>
          <div className="flex-1" />
          <Check /><span className="ml-[6px] mr-[11px]">Actualización en vivo</span>
          <div className={BTN + "h-[24px] w-[80px] text-[#222]"}>Aplicar</div>
        </div>
      </div>
    </div>
    <div className="mt-[4px] flex h-[27px] items-start border-t border-[#bcbcbc]">
      <div className="-mt-px flex h-[27px] w-[110px] items-center justify-center rounded-b-[3px] border border-t-0 border-[#b5b5b5] bg-[#f6f6f6] pt-px">Estilo de capas</div>
      <div className="flex h-[24px] w-[220px] items-center justify-center rounded-b-[2px] border border-l-0 border-t-0 border-[#bdbdbd] bg-[#dcdcdc] tracking-[0.370px] text-[#3c3c3c]">Caja de herramientas de Procesos</div>
    </div>
  </div>
);

/* ---------- status bar ---------- */
const FIELD = "flex h-[24px] shrink-0 items-center rounded-[3px] border border-[#b3b3b3] bg-white ";
const Spin = () => (
  <div className="ml-auto flex h-full w-[14px] flex-col items-center justify-center gap-[4px] border-l border-[#d0d0d0] bg-[#f7f7f7]">
    <Tri className="!h-[4px] !w-[7px] rotate-180 text-[#555]" /><Tri className="!h-[4px] !w-[7px] text-[#555]" />
  </div>
);
const StatusBar = () => (
  <div className="flex h-[29px] shrink-0 items-center whitespace-nowrap pl-[4px] pt-[2px] text-[#3c3c3c]">
    <div className={FIELD + "w-[253px] pl-[8px] text-[#7b7b7b]"}>
      <svg viewBox="0 0 14 14" className="mr-[7px] h-[13px] w-[13px]" fill="none" stroke="#888" strokeWidth="1.400"><circle cx="5.500" cy="5.500" r="4.500" /><path d="M8.500 9l4.500 4.500" /></svg>Escriba para localizar (Ctrl+K)
    </div>
    <span className="ml-[193px] w-[72px]">Coordenada</span>
    <div className={FIELD + "w-[100px] justify-center tracking-[0.380px] text-[#222]"}>-90.240,-0.438</div>
    <svg viewBox="0 0 18 18" className="mb-[3px] ml-[3px] h-[18px] w-[18px]" fill="none" stroke="#333" strokeWidth="1.200"><ellipse cx="5.500" cy="6.500" rx="2.900" ry="5" transform="rotate(-30 5.500 6.500)" /><path d="M2.500 4l6 8M4.500 2l7 8M1.500 8l6 5M14.500 2l-3 5M2 3l4-1M3 6l4-2M4 9l4-3" /><circle cx="11.500" cy="12" r="4" /><circle cx="11.500" cy="12" r="1.300" /></svg>
    <span className="ml-[12px] w-[39px] text-[#222]">Escala</span>
    <div className={FIELD + "w-[90px] pl-[3px] text-[#222]"}>1:1095186<div className="ml-auto flex h-full w-[20px] items-center justify-center border-l border-[#b3b3b3] bg-[#f5f5f5]"><Tri /></div></div>
    <svg viewBox="0 0 14 17" className="ml-[11px] mr-[8px] h-[17px] w-[14px]"><path d="M3.500 8V5c0-5 7-5 7 0v3" fill="none" stroke="#888" strokeWidth="1.700" /><rect x="1" y="7.500" width="12" height="8.500" rx="1.500" fill="#5f5f5f" /></svg>
    <span className="w-[74px]">Amplificador</span>
    <div className={FIELD + "w-[84px] pl-[4px]"}>100%<Spin /></div>
    <span className="ml-[9px] w-[58px]">Rotación</span>
    <div className={FIELD + "w-[84px] pl-[4px]"}>0.0 °<Spin /></div>
    <Check className="ml-[6px]" />
    <span className="ml-[6px] w-[85px]">Representar</span>
    <svg viewBox="0 0 16 16" className="h-[16px] w-[16px]" fill="none"><Globe cx={8} cy={8} r={6.200} c="#777" /><path d="M0.500 8h15" stroke="#777" /></svg>
    <span className="ml-[1px] w-[86px] text-[#2c2c2c]">EPSG:4326</span>
    <svg viewBox="0 0 18 16" className="h-[16px] w-[18px]"><ellipse cx="9" cy="7" rx="8.300" ry="6.300" fill="#555" /><path d="M9 11l6 4.500v-6z" fill="#555" /></svg>
  </div>
);

export default function App() {
  return (
    <div className="relative flex h-[768px] w-[1364px] flex-col overflow-hidden bg-[#efefef] font-['DejaVu_Sans_Condensed','DejaVu_Sans',sans-serif] text-[12px] leading-[16px] tracking-[0.220px] text-[#2a2a2a]">
      <div className="flex h-[23px] shrink-0 items-center bg-white text-black">
        <svg viewBox="0 0 18 18" className="ml-[1px] h-[17px] w-[17px]" fill="none"><circle cx="8.500" cy="9" r="6.300" stroke="#6ba32e" strokeWidth="3.500" /><path d="M9 9h3l5.500 6v2.500h-4L9 12z" fill="#8abf38" /><path d="M8 8h4l1 1.500-2 2-3 0z" fill="#e98c25" /></svg>
        <span className="ml-[5px] w-[1203px] font-['Noto_Sans',sans-serif] text-[11.500px] tracking-[-0.180px]">*Galápagos — QGIS [recording]</span>
        <svg viewBox="0 0 110 12" className="mb-[3px] ml-[18px] h-3 w-[110px]" fill="none" stroke="#222"><path d="M0 6.500h10" /><rect x="45.500" y="3.500" width="7" height="7" /><path d="M47.500 3.500v-2h7v7h-2" /><path d="M91 1l9.500 9.500M100.500 1L91 10.500" /></svg>
      </div>
      <div className="flex h-[21px] shrink-0 items-center border-b border-[#d8d8d8] bg-[#efefef] pl-[10px]">
        {MENU.map(([a, b, c, w]) => <div key={a + b + c} className={"shrink-0 whitespace-nowrap " + w}>{a}<span className="underline underline-offset-2">{b}</span>{c}</div>)}
      </div>
      <TopBar />
      <SecondBar />
      <div className="flex h-[617px] shrink-0 pt-px">
        <LayersDock />
        <div className="flex w-[6px] shrink-0 items-center justify-center"><div className="h-[16px] border-l border-dotted border-[#aaa]" /></div>
        <MapCanvas />
        <div className="flex w-[1px] shrink-0 items-center"><div className="ml-[2px] h-[16px] border-l border-dotted border-[#aaa]" /></div>
        <StyleDock />
      </div>
      <StatusBar />
      <svg viewBox="0 0 12 19" className="absolute left-[981px] top-[638px] h-[19px] w-[12px]"><path d="M.7.700v14.500l3.600-3.300 2.700 6 2.300-1-2.700-5.700h4.800z" fill="#fff" stroke="#666" strokeWidth="0.900" /></svg>
    </div>
  );
}
